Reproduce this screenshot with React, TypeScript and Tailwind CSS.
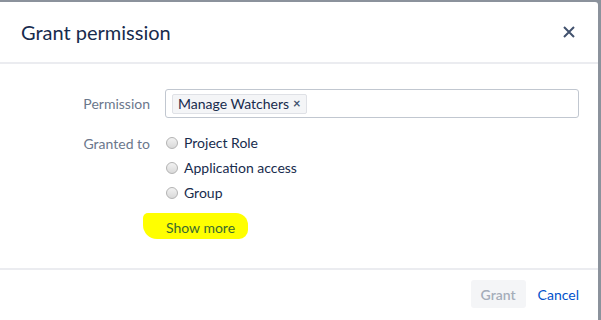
export default function App() {
  const options = ["Project Role", "Application access", "Group"];

  return (
    <div className="h-[320px] w-[601px] overflow-hidden bg-[#8b929c] pt-[2px] pr-[3px]" style={{ fontFamily: "Lato, 'Liberation Sans', sans-serif" }}>
      <div className="flex h-[318px] flex-col rounded-tr-[3px] bg-white text-[14px] text-[#172b4d]">
        {/* Header */}
        <div className="flex h-[62px] shrink-0 items-center justify-between border-b-2 border-[#ebecf0] pl-[21px] pr-[23px]">
          <h2 className="text-[20px] leading-none text-[#172b4d]">Grant permission</h2>
          <button title="Close" className="text-[#42526e]">
            <svg className="h-[12px] w-[12px]" viewBox="0 0 12 12" fill="none" stroke="currentColor" strokeWidth={2}>
              <path d="M1 1l10 10M11 1L1 11" />
            </svg>
          </button>
        </div>

        {/* Body */}
        <div className="flex flex-1 flex-col pt-[25px]">
          <div className="flex items-center">
            <label className="w-[150px] text-right text-[#6b778c]">Permission</label>
            <div className="ml-[15px] flex h-[29px] w-[414px] items-center rounded-[3px] border border-[#c1c7d0] px-[6px]">
              <span className="flex h-[20px] items-center gap-[4px] rounded-[2px] border border-[#dfe1e6] bg-[#f4f5f7] px-[5px] leading-none">
                Manage Watchers
                <span className="text-[13px] font-bold text-[#42526e]">×</span>
              </span>
            </div>
          </div>

          <div className="mt-[12px] flex">
            <label className="w-[150px] pt-[6px] text-right leading-[16px] text-[#6b778c]">Granted to</label>
            <div className="ml-[15px] flex flex-col">
              {options.map((o) => (
                <label key={o} className="flex h-[25px] items-center gap-[6px]">
                  <span className="ml-[1px] h-[12px] w-[12px] rounded-full border border-[#b3b3b3] bg-gradient-to-b from-[#f2f2f2] to-[#d9d9d9]" />
                  <span>{o}</span>
                </label>
              ))}
              <div className="relative mt-[10px] h-[25px]">
                <span className="absolute left-[-22px] top-[-2px] h-[26px] w-[105px] rounded-[5px_12px_9px_14px] bg-[#ffff00]" />
                <a className="relative ml-[1px] leading-[25px] text-[#3b6b2e]">Show more</a>
              </div>
            </div>
          </div>
        </div>

        {/* Footer */}
        <div className="flex h-[52px] shrink-0 items-start justify-end gap-[12px] border-t-2 border-[#ebecf0] pt-[10px] pr-[19px]">
          <button disabled className="h-[28px] rounded-[3px] bg-[#f4f5f7] px-[10px] font-semibold text-[#a5adba]">Grant</button>
          <button className="h-[28px] text-[#0052cc]">Cancel</button>
        </div>
      </div>
    </div>
  );
}
